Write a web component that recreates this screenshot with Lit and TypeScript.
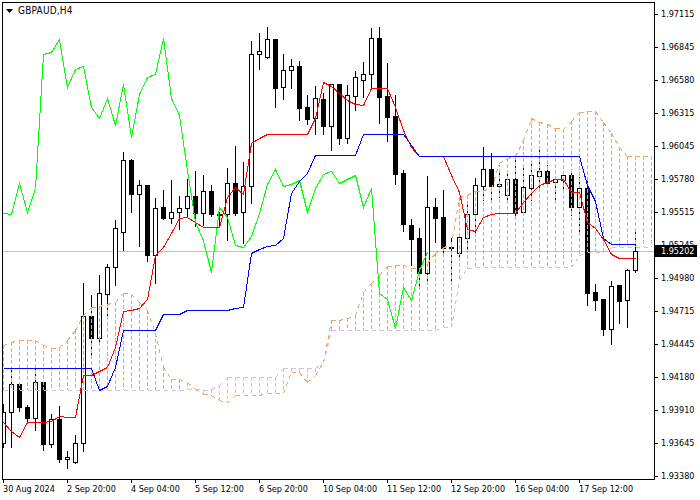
import { LitElement, html, css, svg } from "lit";
import { customElement } from "lit/decorators.js";

type C = [number, number, number, number, number];
const candles: C[] = [
  [404,412,443,447,1],[368,384,412,447,1],[384,384,407,411,0],[405,407,418,422,0],[368,382,418,430,1],
  [382,382,444,450,0],[414,419,444,447,1],[406,419,459,462,0],[451,457,459,468,1],[435,443,462,463,1],
  [283,316,443,451,1],[295,316,338,357,0],[275,293,338,341,1],[264,267,294,319,1],[220,228,267,285,1],
  [152,160,232,250,1],[159,160,194,212,0],[180,185,194,246,1],[185,185,255,261,0],[198,208,255,283,1],
  [190,207,218,219,0],[180,212,218,223,1],[196,208,212,229,1],[179,196,208,216,1],[171,196,213,226,0],
  [175,191,213,225,1],[185,191,214,216,0],[212,214,215,226,0],[168,183,214,240,1],[146,183,213,215,0],
  [162,186,212,243,1],[41,54,186,203,1],[33,51,54,69,1],[27,39,57,58,1],[39,39,88,107,0],
  [54,70,87,99,1],[59,66,70,88,1],[61,66,108,120,0],[95,107,119,124,0],[86,98,118,134,1],
  [93,99,126,134,0],[84,84,126,150,1],[84,84,138,144,0],[85,95,138,143,1],[71,77,96,110,1],
  [62,74,80,97,1],[28,38,74,88,1],[27,38,97,123,0],[63,96,117,141,0],[95,116,174,184,0],
  [170,173,224,231,0],[219,225,239,265,0],[228,238,273,285,0],[176,207,273,280,1],[198,207,218,242,0],
  [190,217,248,252,0],[238,247,248,280,0],[237,237,253,260,1],[205,214,238,250,1],[178,185,214,233,1],
  [147,169,186,200,1],[153,169,186,199,0],[170,184,186,197,1],[173,179,195,201,1],[156,179,213,215,0],
  [168,187,212,213,1],[163,175,188,200,1],[148,171,176,187,1],[165,171,183,184,0],[177,179,182,201,1],
  [173,175,180,190,1],[173,175,207,215,0],[177,188,207,232,1],[177,188,293,305,0],[284,292,300,310,0],
  [299,299,329,335,0],[281,286,329,344,1],[285,285,301,323,0],[269,270,300,327,1],[230,251,270,272,1],
];

const green = [213,214,183,212,188,54,52,39,87,69,66,107,118,98,125,84,137,94,77,74,38,98,115,170,222,240,272,207,217,245,247,236,213,184,169,186,184,180,212,188,174,171,183,179,175,207,188,293,299,328,287,300,270,252];
const red = [422,431,437,422,422,422,421,416,417,417,375,375,371,367,347,311,310,308,299,255,247,233,218,217,222,227,227,227,197,187,194,143,138,134,134,134,134,134,134,118,82,86,93,100,104,105,88,88,88,107,130,147,156,156,156,156,175,192,229,231,217,214,213,213,213,202,193,185,182,179,179,192,192,222,228,239,254,258,258,258];
const blue = [368,368,368,368,368,368,368,368,368,368,368,368,390,386,367,330,330,330,330,330,314,314,314,310,310,310,310,310,310,308,307,253,249,246,245,238,193,181,173,155,155,155,155,155,155,134,134,134,134,134,134,145,156,156,156,156,156,156,156,156,156,156,156,156,156,156,156,156,156,156,156,156,156,185,201,238,244,244,244,244];
const spanA = [345,342,340,340,340,345,348,347,340,330,315,307,306,304,302,293,294,302,310,333,367,379,379,382,389,394,395,400,403,395,395,395,395,393,393,393,372,372,382,375,362,320,320,318,315,292,283,275,266,265,265,268,268,263,253,247,245,197,195,191,190,188,163,158,156,140,118,122,124,128,129,121,112,111,111,122,133,147,156,156,156,156];
const spanB = [390,390,390,390,390,390,390,390,390,390,390,390,390,390,390,390,390,390,390,390,390,390,390,389,389,390,389,385,377,377,377,377,377,377,377,368,368,368,368,368,362,330,330,330,330,330,330,330,330,330,330,330,330,330,330,327,327,280,268,267,267,267,267,267,267,267,267,267,267,267,267,267,255,252,252,252,247,247,247,247,247,247];

const prices = ["1.97115","1.96845","1.96580","1.96315","1.96045","1.95780","1.95515","1.95245","1.94980","1.94715","1.94445","1.94180","1.93910","1.93645","1.93380"];
const times = ["30 Aug 2024","2 Sep 20:00","4 Sep 04:00","5 Sep 12:00","6 Sep 20:00","10 Sep 04:00","11 Sep 12:00","12 Sep 20:00","16 Sep 04:00","17 Sep 12:00"];

const X = (k: number) => 3 + 8 * k + 0.5;
const pts = (a: number[]) => a.map((y, k) => `${X(k)},${y + 0.5}`).join(" ");
const dashed = (a: number[], cls: string) =>
  a.slice(0, -1).map((y, k) => svg`<line class="seg ${cls}" x1=${X(k)} y1=${y + 0.5} x2=${X(k + 1)} y2=${a[k + 1] + 0.5}></line>`);

@customElement("app-root")
export class AppRoot extends LitElement {
  static styles = css`
    :host {
      display: block;
      width: 700px;
      height: 500px;
      background: #fff;
      color: #000;
      font-family: "DejaVu Sans Condensed", "DejaVu Sans", sans-serif;
      font-stretch: condensed;
      font-size: 9px;
    }
    .root {
      display: grid;
      grid-template-columns: 655px 45px;
      grid-template-rows: 480px 20px;
      width: 700px;
      height: 500px;
      overflow: hidden;
    }
    .plot {
      position: relative;
      box-sizing: border-box;
      margin: 2px 0 0 2px;
      width: 653px;
      height: 478px;
      border: 1px solid #000;
      overflow: hidden;
    }
    .plot svg { display: block; }
    .title {
      position: absolute;
      left: 3px;
      top: 2px;
      display: flex;
      align-items: center;
      gap: 5px;
      font-size: 10px;
      letter-spacing: 0.2px;
      line-height: 12px;
    }
    .title svg { display: block; }
    .prices {
      position: relative;
      display: flex;
      flex-direction: column;
      gap: 22px;
      padding-top: 9px;
    }
    .price {
      display: flex;
      align-items: center;
      gap: 3px;
      height: 11px;
      line-height: 11px;
    }
    .tick-h { width: 3px; height: 1px; background: #000; flex: none; }
    .tag {
      position: absolute;
      left: 0;
      top: 245px;
      width: 42px;
      height: 12px;
      line-height: 13px;
      box-sizing: border-box;
      padding-left: 6px;
      background: #000;
      color: #fff;
    }
    .times {
      grid-column: 1 / 3;
      display: flex;
      padding-left: 3px;
    }
    .time { flex: none; width: 64px; display: flex; flex-direction: column; }
    .tick-v { width: 1px; height: 3px; background: #000; }
    .time span { line-height: 11px; margin-top: 1px; white-space: nowrap; }
    .wick { stroke: #000; stroke-width: 1; shape-rendering: crispEdges; }
    .up { fill: #fff; stroke: #000; stroke-width: 1; shape-rendering: crispEdges; }
    .down { fill: #000; stroke: #000; stroke-width: 1; shape-rendering: crispEdges; }
    .hatch { stroke-width: 1; stroke-dasharray: 4 2; shape-rendering: crispEdges; fill: none; }
    .seg { stroke-width: 1; stroke-dasharray: 4 4; shape-rendering: crispEdges; fill: none; }
    .line { fill: none; stroke-width: 1; shape-rendering: crispEdges; }
    .bid { stroke: #c0c0c0; stroke-width: 1; shape-rendering: crispEdges; }
    .a { stroke: #f4a460; }
    .b { stroke: #d8bfd8; }
    .r { stroke: #ff0000; }
    .bl { stroke: #0000ff; }
    .g { stroke: #00ff00; }
  `;

  render() {
    return html`
      <div class="root">
        <div class="plot">
          <svg width="651" height="476" viewBox="3 3 651 476">
            <line class="bid" x1="3" x2="654" y1="251.5" y2="251.5"></line>
            ${candles.map(([wt, bt, bb, wb, up], k) => {
              const x = X(k);
              return svg`
                <line class="wick" x1=${x} x2=${x} y1=${wt} y2=${wb + 1}></line>
                <rect class=${up ? "up" : "down"} x=${x - 2} y=${bt + 0.5} width="4" height=${bb - bt}></rect>
              `;
            })}
            ${spanA.map((a, k) => {
              const b = spanB[k];
              const x = X(k);
              return svg`<line class="hatch ${a < b ? "a" : "b"}" x1=${x} x2=${x} y1=${Math.min(a, b)} y2=${Math.max(a, b)}></line>`;
            })}
            ${dashed(spanB, "b")}
            ${dashed(spanA, "a")}
            <polyline class="line g" points=${pts(green)}></polyline>
            <polyline class="line r" points=${pts(red)}></polyline>
            <polyline class="line bl" points=${pts(blue)}></polyline>
          </svg>
          <div class="title">
            <svg width="7" height="4" viewBox="0 0 7 4"><path d="M0 0H7L3.5 4Z" fill="#000"></path></svg>
            <span>GBPAUD,H4</span>
          </div>
        </div>
        <div class="prices">
          ${prices.map((p) => html`<div class="price"><div class="tick-h"></div><span>${p}</span></div>`)}
          <div class="tag">1.95202</div>
        </div>
        <div class="times">
          ${times.map((t) => html`<div class="time"><div class="tick-v"></div><span>${t}</span></div>`)}
        </div>
      </div>
    `;
  }
}
